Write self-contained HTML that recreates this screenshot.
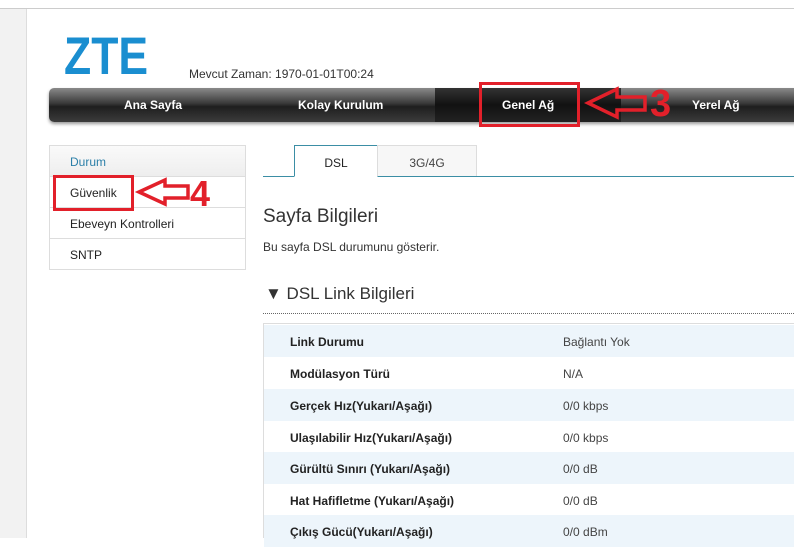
<!DOCTYPE html>
<html><head><meta charset="utf-8"><style>
*{margin:0;padding:0;box-sizing:border-box}
body{width:794px;height:538px;overflow:hidden;background:#fff;font-family:"Liberation Sans","DejaVu Sans",sans-serif;position:relative;color:#222}
.a{position:absolute}
.nav{left:49px;top:88px;width:760px;height:34px;border-radius:5px;background:linear-gradient(#8a8a8a 0%,#3a3a3a 45%,#1e1e1e 55%,#3c3c3c 100%);box-shadow:0 2px 3px #999}
.nav span{position:absolute;top:10px;color:#fff;font-size:12px;font-weight:bold}
.side div{height:31px;border-bottom:1px solid #ddd;padding:9px 0 0 20px;font-size:12px}
.row{position:absolute;left:264px;width:530px;height:32px;font-size:12px}
.row b{position:absolute;left:26px;top:10px}
.row i{position:absolute;left:299px;top:10px;font-style:normal;color:#444}
.hi{background:#edf5fb}
</style></head><body>
<div class="a" style="left:0;top:8px;width:794px;height:1px;background:#ccc"></div>
<div class="a" style="left:0;top:9px;width:27px;height:529px;background:#f2f2f2;border-right:1px solid #ddd"></div>
<div class="a" style="left:64px;top:30px;font-size:53px;font-weight:bold;color:#1a8ed0;transform:scaleX(0.84);transform-origin:left top;line-height:53px">ZTE</div>
<div class="a" style="left:189px;top:67px;font-size:12px;color:#333">Mevcut Zaman: 1970-01-01T00:24</div>
<div class="a nav">
<div class="a" style="left:386px;top:0;width:186px;height:34px;background:linear-gradient(#333,#111 50%,#222)"></div>
<span style="left:75px">Ana Sayfa</span><span style="left:249px">Kolay Kurulum</span>
<span style="left:453px">Genel Ağ</span><span style="left:643px">Yerel Ağ</span></div>
<div class="a" style="left:479px;top:82px;width:101px;height:45px;border:3px solid #e2202a"></div>
<svg class="a" style="left:0;top:0" width="794" height="538">
<path d="M588 103 L617 89 L617 97 L645 97 L645 110 L617 110 L617 117 Z" fill="none" stroke="#e2202a" stroke-width="3.5"/>
<path d="M139 192 L165 180 L165 186 L188 186 L188 198 L165 198 L165 204 Z" fill="none" stroke="#e2202a" stroke-width="3.5"/>
</svg>
<div class="a" style="left:650px;top:82px;font-size:38px;font-weight:bold;color:#e2202a;line-height:44px">3</div>
<div class="a" style="left:190px;top:172px;font-size:36px;font-weight:bold;color:#e2202a;line-height:44px">4</div>
<div class="a side" style="left:49px;top:145px;width:197px;border:1px solid #ddd;border-bottom:none">
<div style="background:linear-gradient(#fafafa,#eee);color:#2b7fa8">Durum</div>
<div>Güvenlik</div><div>Ebeveyn Kontrolleri</div><div>SNTP</div></div>
<div class="a" style="left:53px;top:175px;width:81px;height:36px;border:3px solid #e2202a"></div>
<div class="a" style="left:263px;top:176px;width:531px;height:1px;background:#3b8ea5"></div>
<div class="a" style="left:294px;top:145px;width:84px;height:32px;border:1px solid #3b8ea5;border-bottom:1px solid #fff;background:#fff;text-align:center;padding-top:10px;font-size:12px">DSL</div>
<div class="a" style="left:377px;top:145px;width:100px;height:31px;border:1px solid #ddd;border-bottom:none;background:#f7f7f7;text-align:center;padding-top:10px;font-size:12px;color:#444">3G/4G</div>
<div class="a" style="left:263px;top:206px;font-size:19px;color:#333">Sayfa Bilgileri</div>
<div class="a" style="left:263px;top:240px;font-size:12px;color:#333">Bu sayfa DSL durumunu gösterir.</div>
<div class="a" style="left:265px;top:284px;font-size:17px;color:#333">▼ DSL Link Bilgileri</div>
<div class="a" style="left:263px;top:313px;width:531px;border-top:1px dotted #666"></div>
<div class="a" style="left:263px;top:323px;width:531px;height:215px;border:1px solid #ddd;border-right:none;border-bottom:none"></div>
<div class="row hi" style="top:325px"><b>Link Durumu</b><i>Bağlantı Yok</i></div>
<div class="row" style="top:357px"><b>Modülasyon Türü</b><i>N/A</i></div>
<div class="row hi" style="top:389px"><b>Gerçek Hız(Yukarı/Aşağı)</b><i>0/0 kbps</i></div>
<div class="row" style="top:421px"><b>Ulaşılabilir Hız(Yukarı/Aşağı)</b><i>0/0 kbps</i></div>
<div class="row hi" style="top:452px"><b>Gürültü Sınırı (Yukarı/Aşağı)</b><i>0/0 dB</i></div>
<div class="row" style="top:484px"><b>Hat Hafifletme (Yukarı/Aşağı)</b><i>0/0 dB</i></div>
<div class="row hi" style="top:515px"><b>Çıkış Gücü(Yukarı/Aşağı)</b><i>0/0 dBm</i></div>
</body></html>
